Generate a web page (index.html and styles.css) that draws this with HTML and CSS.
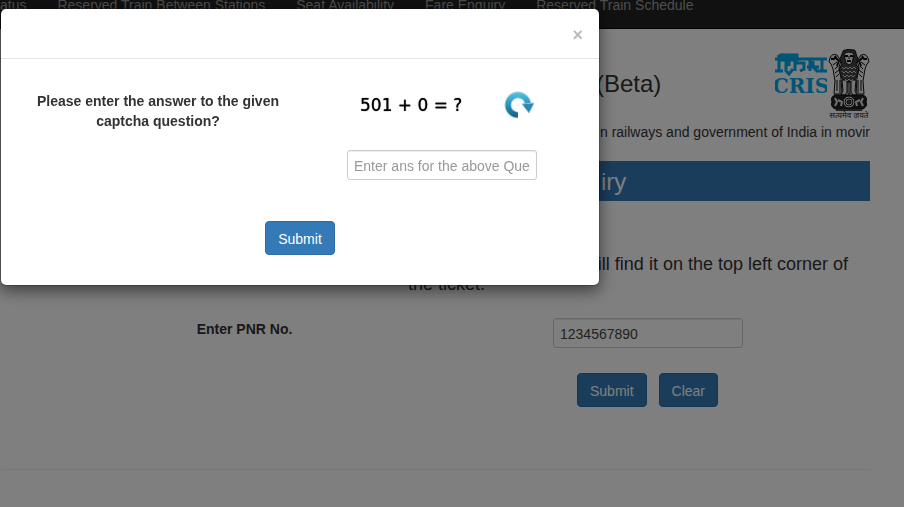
FILE: index.html
```
<!DOCTYPE html>
<html lang="en">
<head>
<meta charset="utf-8">
<title>PNR Enquiry</title>
<link rel="stylesheet" href="styles.css">
</head>
<body>
<nav class="navbar">
  <a href="#">atus</a>
  <a href="#">Reserved Train Between Stations</a>
  <a href="#">Seat Availability</a>
  <a href="#">Fare Enquiry</a>
  <a href="#">Reserved Train Schedule</a>
</nav>
<main class="page">
  <header class="masthead">
    <h3 class="site-title">(Beta)</h3>
    <div class="logos">
      <svg class="cris" viewBox="0 0 52 44" role="img" aria-label="CRIS">
        <g fill="none" stroke="#00a8ea" stroke-width="3">
          <path d="M0 6H52M4 2V19M0 18H8M11 7V18L14 21 18 16M20 3V18M20 10H29V16L25 18M14 8V13M35 7V18M32 14H44M38 8V14L43 19M47 6V19M42 18H52"/>
          <path d="M4 3Q6 1 9 2L22 2V7H4Z" fill="#00a8ea"/>
        </g>
        <text x="26" y="40" text-anchor="middle" class="cris-text">CRIS</text>
      </svg>
      <svg class="emblem" viewBox="0 0 42 72" role="img" aria-label="Emblem">
        <g stroke="#111" stroke-width="1" stroke-linejoin="round">
          <path d="M9 6Q4 4 2 9L1 13 3 15 5 20 7 32 6 45H14L13 29 11 18 13 12Z" fill="#eee"/>
          <path d="M33 6Q38 4 40 9L41 13 39 15 37 20 35 32 36 45H28L29 29 31 18 29 12Z" fill="#eee"/>
          <path d="M14 5Q15 0 18 1 21 -1 24 1 28 0 28 5L30 10 28 15 31 20 29 28 25 33H17L13 28 11 20 14 15 12 10Z" fill="#444"/>
          <path d="M16 5Q21 1 26 5L25 10 24 14 21 16 18 14 17 10Z" fill="#eee"/>
          <path d="M14 31H19L19 43 17 46H13L15 42ZM23 31H28L27 42 29 46H25L23 43ZM20 33H22V45H20Z" fill="#eee"/>
          <path d="M17 7H20M22 7H25M19 12H23M3 10H6L8 7M39 10H36L34 7M7 8L11 12 9 17M35 8L31 12 33 17" fill="none" stroke-width="2"/>
          <path d="M21 7V10M5 16L9 13M37 16L33 13M7 20L10 17M35 20L32 17M7 24L11 21M35 24L31 21M8 28L11 25M34 28L31 25M9 31V42M33 31V42M12 31V44M30 31V44" fill="none"/>
          <path d="M14 18L16 20 18 18 20 20 22 18 24 20 26 18 28 20M14 22L16 24 18 22 20 24 22 22 24 24 26 22 28 24M15 26L17 28 19 26 21 28 23 26 25 28 27 26M17 30L19 32 21 30 23 32 25 30" fill="none" stroke="#ccc"/>
          <path d="M7 46H35Q40 48 38 53 40 57 35 60H7Q2 57 4 53 2 48 7 46Z" fill="#222"/>
          <circle cx="21" cy="53" r="6" fill="#ddd"/>
          <circle cx="21" cy="53" r="4" fill="none"/>
          <circle cx="21" cy="53" r="2" fill="#444"/>
          <path d="M7 49L9 53 7 57M10 51L14 53 13 57M35 49L33 53 35 57M32 51L28 53 29 57" fill="none" stroke="#ddd" stroke-width="2"/>
          <path d="M8 61H34" stroke="#444" stroke-width="2"/>
        </g>
        <text x="21" y="69" text-anchor="middle" class="motto">सत्यमेव जयते</text>
      </svg>
    </div>
  </header>
  <p class="ticker">n railways and government of India in movir</p>
  <h3 class="bar">iry</h3>
  <p class="hint">ill find it on the top left corner of</p>
  <p class="hint-end">the ticket.</p>
  <form class="pnr">
    <label for="pnr">Enter PNR No.</label>
    <div class="field"><input id="pnr" class="box" type="text" value="1234567890"></div>
    <div class="actions"><button class="btn" type="button">Submit</button><button class="btn" type="button">Clear</button></div>
  </form>
  <hr>
</main>
<div class="backdrop">
  <form class="modal" role="dialog" aria-label="Captcha">
    <div class="modal-head"><button class="close" type="button" aria-label="Close">×</button></div>
    <div class="modal-body">
      <label for="answer">Please enter the answer to the given captcha question?</label>
      <div class="captcha">
        <div class="question">
          <span class="sum">501 + 0 = ?</span>
          <button class="refresh" type="button" aria-label="Refresh">
            <svg viewBox="0 0 30 28">
              <defs><linearGradient id="ring" gradientUnits="userSpaceOnUse" x1="0" y1="27" x2="0" y2="2"><stop offset="0" stop-color="#0f5c88"/><stop offset=".5" stop-color="#2c8db8"/><stop offset="1" stop-color="#4cc4e4"/></linearGradient></defs>
              <path d="M14 24A10 10 0 1 1 24 13" fill="none" stroke="#a9cfdf" stroke-width="7"/>
              <path d="M14 24A10 10 0 1 1 24 13" fill="none" stroke="url(#ring)" stroke-width="5"/>
              <path d="M18 13L30 12 25 22Z" fill="#2782ae" stroke="#8fbfd4" stroke-width="1" stroke-linejoin="round"/>
              <path d="M22 13H26L25 19Z" fill="#2c8db8"/>
            </svg>
          </button>
        </div>
        <input id="answer" class="box" type="text" placeholder="Enter ans for the above Question">
      </div>
    </div>
    <div class="modal-foot"><button class="btn" type="button">Submit</button></div>
  </form>
</div>
</body>
</html>
```
FILE: styles.css
```
* { box-sizing: border-box; }
body {
  margin: 0;
  overflow: hidden;
  background: #fff;
  color: #333;
  font: 14px/20px "Liberation Sans", Arial, sans-serif;
}
h3, p { margin: 0; font-weight: normal; }
.navbar {
  display: flex;
  gap: 31px;
  padding-bottom: 18px;
  background: #222;
  border-bottom: 1px solid #080808;
  line-height: 10px;
}
.navbar a { color: #9d9d9d; text-decoration: none; white-space: nowrap; }
.page { margin: 0 34px 0 1px; padding-top: 20px; }
.masthead { display: flex; justify-content: space-between; height: 72px; }
.site-title { margin: 20px 0 0 595px; font-size: 24px; line-height: 30px; }
.logos { display: flex; gap: 1px; }
.cris { width: 52px; height: 44px; margin-top: 4px; }
.cris-text { font: bold 20px "DejaVu Serif", serif; fill: #00a8ea; }
.emblem { width: 42px; height: 72px; }
.motto { font: 8px "Noto Sans", sans-serif; fill: #222; }
.ticker { padding-top: 1px; text-align: right; overflow: hidden; white-space: nowrap; }
.bar {
  margin-top: 19px;
  padding: 2px 0 0 600px;
  background: #337ab7;
  color: #fff;
  font-size: 24px;
  line-height: 38px;
}
.hint, .hint-end { font-size: 18px; line-height: 20px; }
.hint { margin-top: 53px; padding-right: 22px; text-align: right; }
.hint-end { padding-right: 385px; text-align: right; }
.pnr {
  display: grid;
  grid-template-columns: 487px 1fr;
  row-gap: 25px;
  margin-top: 24px;
}
.pnr label { padding-top: 1px; text-align: center; font-weight: bold; }
.field, .actions { grid-column: 2; display: flex; gap: 12px; }
.field { grid-row: 1; padding-left: 65px; }
.actions { padding-left: 89px; }
.box {
  width: 190px;
  height: 30px;
  padding: 6px 6px 4px;
  border: 1px solid #ccc;
  border-radius: 3px;
  box-shadow: inset 0 1px 1px rgba(0, 0, 0, .08);
  color: #444;
  font: inherit;
}
.box::placeholder { color: #999; opacity: 1; }
.btn {
  padding: 7px 12px 5px;
  border: 1px solid #2e6da4;
  border-radius: 4px;
  background: #337ab7;
  color: #fff;
  font: inherit;
}
hr { margin: 62px 0 0; border: 0; border-top: 1px solid #eee; }
.backdrop { position: fixed; inset: 0; padding-top: 8px; background: rgba(0, 0, 0, .5); }
.modal {
  width: 600px;
  max-width: 100%;
  background: #fff;
  background-clip: padding-box;
  border: 1px solid rgba(0, 0, 0, .2);
  border-radius: 6px;
  box-shadow: 0 5px 15px rgba(0, 0, 0, .5);
}
.modal-head { display: flex; justify-content: flex-end; padding: 16px 15px 13px; border-bottom: 1px solid #e5e5e5; }
.close { padding: 0 1px; border: 0; background: none; color: #bbb; font: bold 18px/20px "Liberation Sans", sans-serif; }
.modal-body { display: grid; grid-template-columns: 314px 1fr; padding-top: 30px; }
.modal-body label { padding: 2px 30px; font-weight: bold; text-align: center; }
.captcha { padding-left: 32px; }
.question { display: flex; align-items: center; gap: 42px; height: 32px; margin-bottom: 29px; padding-left: 13px; }
.sum { color: #000; font: 17px/20px "DejaVu Sans", sans-serif; text-shadow: 0 0 1px #000; }
.refresh { padding: 0; border: 0; background: none; }
.refresh svg { display: block; width: 30px; height: 28px; }
.modal-foot { display: flex; justify-content: center; padding: 41px 0 30px; }
```
